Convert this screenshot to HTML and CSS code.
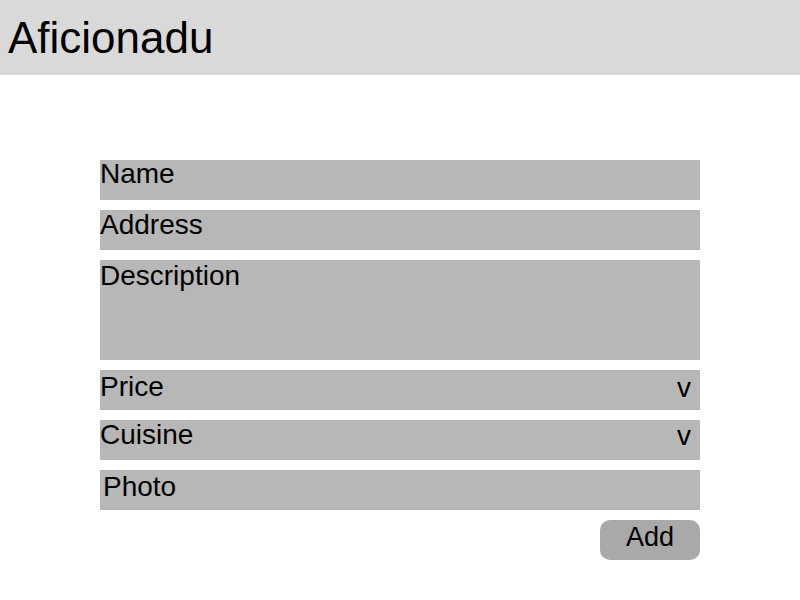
FILE: index.html
```html
<!DOCTYPE html>
<html lang="en">
<head>
<meta charset="utf-8">
<title>Aficionadu</title>
<link rel="stylesheet" href="styles.css">
</head>
<body>
<header class="app-header">
  <h1 class="app-title">Aficionadu</h1>
</header>
<main class="form">
  <div class="field">Name</div>
  <div class="field field-address">Address</div>
  <div class="field field-tall">Description</div>
  <div class="field field-select field-price"><span>Price</span><span class="caret">v</span></div>
  <div class="field field-select"><span>Cuisine</span><span class="caret">v</span></div>
  <div class="field field-photo">Photo</div>
  <button class="add-btn" type="button">Add</button>
</main>
</body>
</html>
```
FILE: styles.css
```css
* { box-sizing: border-box; }
html, body {
  margin: 0;
  padding: 0;
  background: #ffffff;
  font-family: "Liberation Sans", Arial, sans-serif;
  color: #000;
}
.app-header {
  height: 75px;
  background: #d9d9d9;
  padding: 16px 0 0 8px;
}
.app-title {
  margin: 0;
  font-size: 44px;
  line-height: 44px;
  font-weight: normal;
}
.form {
  width: 600px;
  margin: 85px 0 0 100px;
  display: flex;
  flex-direction: column;
  gap: 10px;
}
.field {
  height: 40px;
  background: #b7b7b7;
  font-size: 28px;
  line-height: 28px;
}
.field-address { padding-top: 1px; }
.field-tall { height: 100px; padding-top: 2px; }
.field-select {
  display: flex;
  justify-content: space-between;
  padding-right: 9px;
  padding-top: 1px;
}
.field-price { padding-top: 3px; }
.field-photo { padding: 3px 0 0 3px; }
.caret { padding-top: 1px; }
.add-btn {
  align-self: flex-end;
  width: 100px;
  height: 40px;
  border: none;
  border-radius: 10px;
  background: #a9a9a9;
  font-family: "Liberation Sans", Arial, sans-serif;
  font-size: 27px;
  line-height: 27px;
  padding: 4px 0 0 0;
  display: flex;
  justify-content: center;
  align-items: flex-start;
  color: #000;
}
```
